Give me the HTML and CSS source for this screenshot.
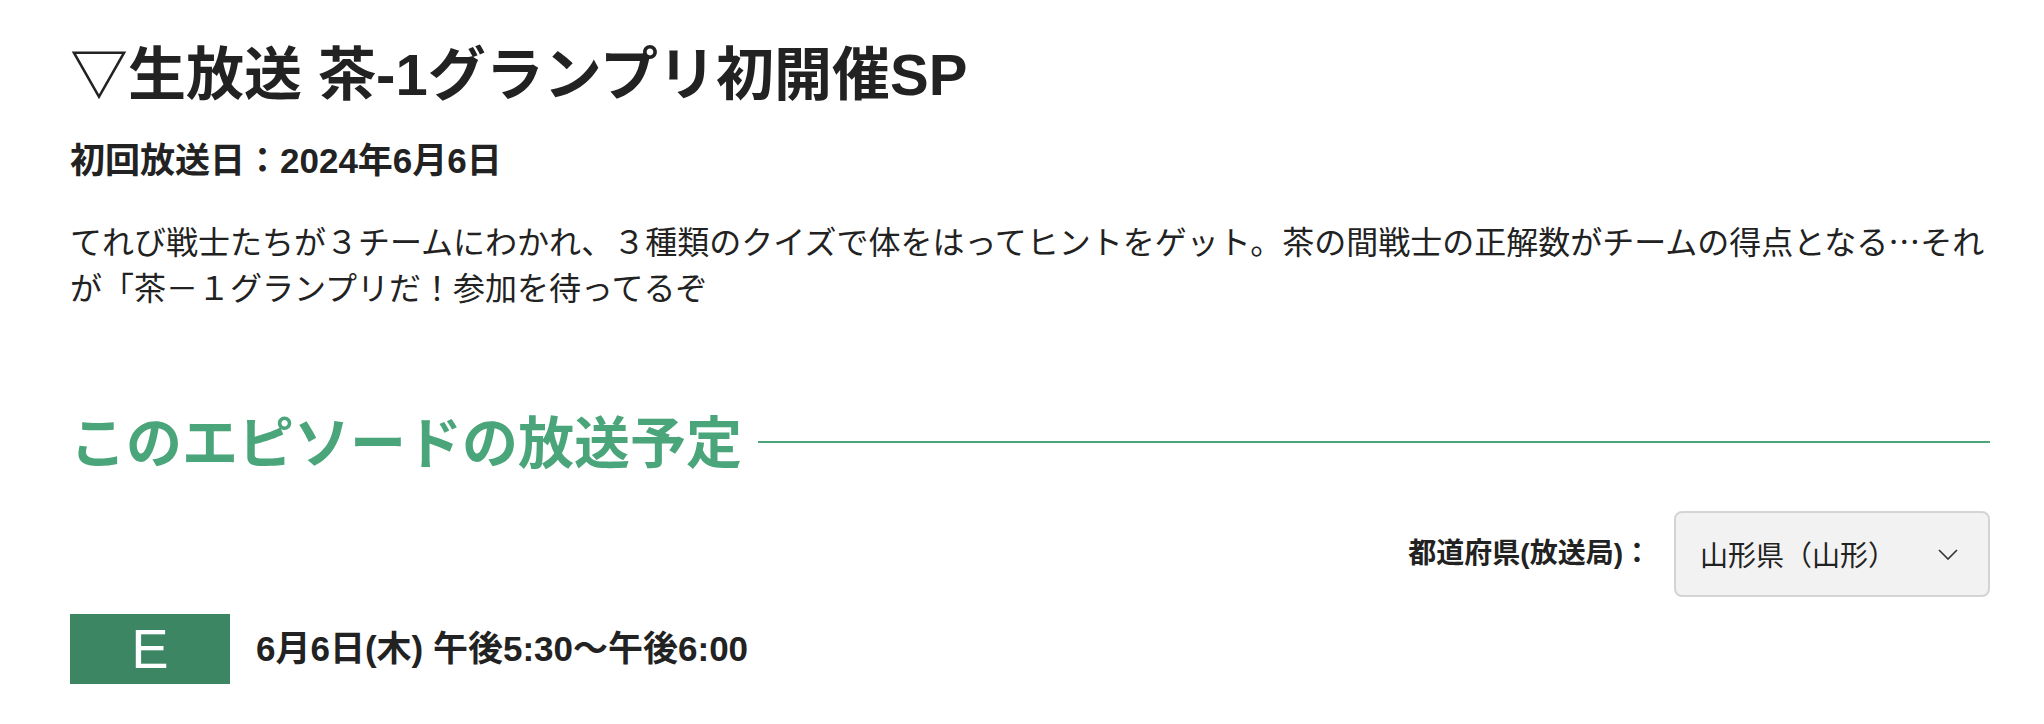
FILE: index.html
```html
<!DOCTYPE html>
<html lang="ja">
<head>
<meta charset="utf-8">
<title>▽生放送 茶-1グランプリ初開催SP</title>
<link rel="stylesheet" href="styles.css">
</head>
<body>
<main class="page">
  <h1 class="title">▽生放送 茶-1グランプリ初開催SP</h1>
  <p class="first-air">初回放送日：2024年6月6日</p>
  <p class="desc">てれび戦士たちが３チームにわかれ、３種類のクイズで体をはってヒントをゲット。茶の間戦士の正解数がチームの得点となる…それが「茶－１グランプリだ！参加を待ってるぞ</p>

  <div class="section-head">
    <h2 class="section-title">このエピソードの放送予定</h2>
    <span class="section-rule"></span>
  </div>

  <div class="area-row">
    <span class="area-label">都道府県(放送局)：</span>
    <div class="area-select">
      <span class="area-value">山形県（山形）</span>
      <svg class="chevron" width="20" height="11" viewBox="0 0 20 11" aria-hidden="true"><polyline points="1,1 10,10 19,1" fill="none" stroke="#333" stroke-width="1.6"/></svg>
    </div>
  </div>

  <div class="sched-row">
    <span class="channel">E</span>
    <span class="sched-time">6月6日(木) 午後5:30〜午後6:00</span>
  </div>
</main>
</body>
</html>
```

FILE: styles.css
```css
html, body {
  margin: 0;
  padding: 0;
  background: #fff;
}

body {
  font-family: "Noto Sans CJK JP", sans-serif;
  color: #222;
}

.page {
  width: 1920px;
  padding: 36px 0 0 70px;
}

.title {
  margin: 0;
  font-family: "Liberation Sans", "Noto Sans CJK JP", sans-serif;
  font-size: 58px;
  line-height: 78px;
  font-weight: 700;
  color: #222;
}

.first-air {
  margin: 23px 0 0;
  font-family: "Liberation Sans", "Noto Sans CJK JP", sans-serif;
  font-size: 35px;
  line-height: 48px;
  font-weight: 700;
}

.desc {
  margin: 32px 0 0;
  font-size: 32px;
  line-height: 46px;
  font-weight: 400;
}

.section-head {
  display: flex;
  align-items: center;
  margin-top: 91px;
}

.section-title {
  margin: 0;
  font-size: 56px;
  line-height: 78px;
  font-weight: 700;
  color: #4aa57a;
  white-space: nowrap;
}

.section-rule {
  flex: 1;
  height: 2px;
  margin: 6px 0 0 16px;
  background: #4aa57a;
}

.area-row {
  display: flex;
  justify-content: flex-end;
  align-items: center;
  gap: 23px;
  margin-top: 33px;
}

.area-label {
  font-family: "Liberation Sans", "Noto Sans CJK JP", sans-serif;
  font-size: 28px;
  font-weight: 700;
  line-height: 40px;
}

.area-select {
  box-sizing: border-box;
  width: 316px;
  height: 86px;
  display: flex;
  align-items: center;
  justify-content: space-between;
  padding: 0 30px 0 24px;
  background: #f2f2f2;
  border: 2px solid #d4d4d4;
  border-radius: 8px;
}

.area-value {
  font-size: 28px;
  line-height: 40px;
  font-weight: 400;
}

.chevron {
  display: block;
}

.sched-row {
  display: flex;
  align-items: center;
  gap: 26px;
  margin-top: 17px;
}

.channel {
  width: 160px;
  height: 70px;
  display: flex;
  align-items: center;
  justify-content: center;
  background: #3c8664;
  color: #fff;
  font-family: "Liberation Sans", sans-serif;
  font-size: 56px;
  font-weight: 400;
  line-height: 1;
}

.sched-time {
  font-family: "Liberation Sans", "Noto Sans CJK JP", sans-serif;
  font-size: 35px;
  line-height: 46px;
  font-weight: 700;
}
```
